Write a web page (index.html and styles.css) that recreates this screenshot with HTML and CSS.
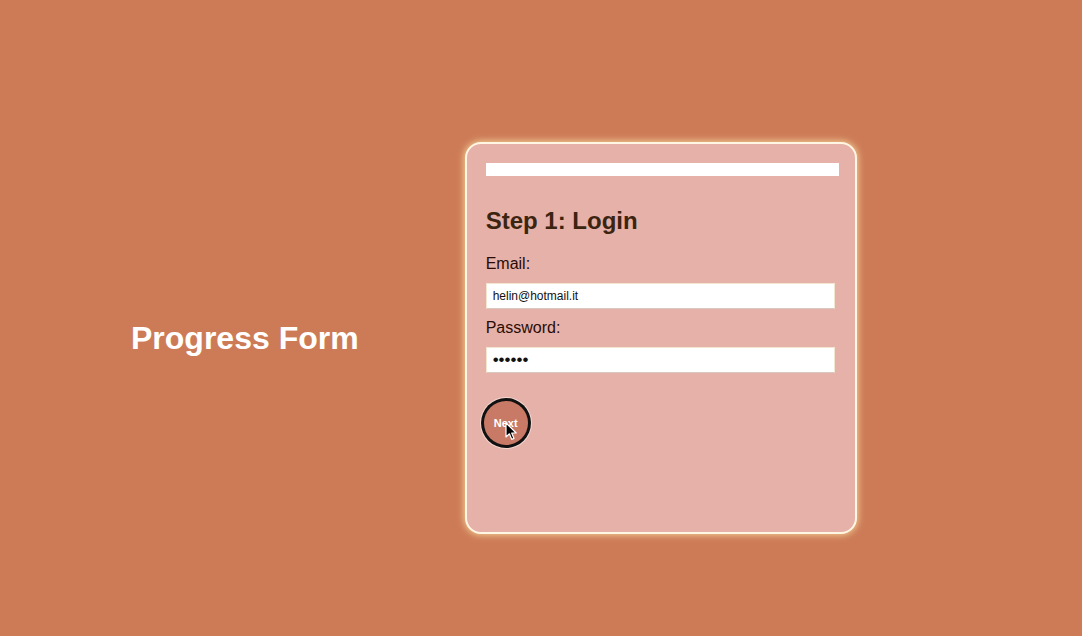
FILE: index.html
```html
<!doctype html>
<html lang="en">
<head>
    <meta charset="UTF-8">
    <title>Progress Form</title>
    <link rel="stylesheet" href="styles.css">
</head>
<body>
    <div class="page">
        <h1 class="title">Progress Form</h1>
        <div class="card">
            <div class="progress">
                <div class="progress-fill" style="width: 0%"></div>
            </div>
            <form class="step" id="step1">
                <h2>Step 1: Login</h2>
                <label for="email">Email:</label>
                <input type="email" id="email" value="helin@hotmail.it">
                <label for="password">Password:</label>
                <input type="password" id="password" value="123456">
                <div class="actions">
                    <button type="button" class="next">Next</button>
                    <svg class="cursor" width="13" height="19" viewBox="0 0 13 19">
                        <path d="M1 1 L1 15 L4.4 11.8 L6.8 17.4 L9 16.4 L6.7 11 L11.2 11 Z" fill="#000" stroke="#fff" stroke-width="1.2" stroke-linejoin="round"/>
                    </svg>
                </div>
            </form>
        </div>
    </div>
</body>
</html>
```

FILE: styles.css
```css
* {
    box-sizing: border-box;
}
body {
    margin: 0;
    background: #cd7b57;
    font-family: 'Liberation Sans', Arial, sans-serif;
    overflow: hidden;
}
.page {
    display: flex;
    align-items: center;
    gap: 106px;
    height: 636px;
    padding: 40px 0 0 131px;
}
.title {
    margin: 0;
    color: #fff;
    font-size: 32px;
    font-weight: bold;
}
.card {
    width: 392px;
    height: 392px;
    padding: 19px 16px 19px 19px;
    background: #e6b1a8;
    border: 2px solid #fff6e4;
    border-radius: 16px;
    box-shadow: 0 0 7px 1px rgba(255, 236, 170, 0.75);
}
.progress {
    height: 13px;
    background: #fff;
}
.progress-fill {
    height: 100%;
    background: #c87660;
}
.step h2 {
    margin: 31px 0 20px;
    color: #3b2410;
    font-size: 24px;
    font-weight: bold;
    line-height: 28px;
}
.step label {
    display: block;
    margin-bottom: 10px;
    color: #2a0c06;
    font-size: 16px;
    line-height: 18px;
}
.step input {
    display: block;
    width: 349px;
    height: 26px;
    margin: 0 0 10px;
    padding: 0 6px;
    border: 1px solid #f3e6cf;
    border-bottom-color: #d8c8c0;
    background: #fff;
    color: #111;
    font-family: 'Liberation Sans', Arial, sans-serif;
    font-size: 12px;
    outline: none;
}
.step input[type=password] {
    font-size: 17px;
    letter-spacing: 0;
}
.actions {
    position: relative;
    margin-top: 28px;
}
.next {
    width: 44px;
    height: 44px;
    margin-left: -2px;
    border: none;
    border-radius: 50%;
    background: #c97a66;
    color: #fff;
    font-family: 'Liberation Sans', Arial, sans-serif;
    font-size: 11px;
    font-weight: bold;
    padding: 0;
    box-shadow: 0 0 0 3px #111, 0 0 0 4px rgba(255, 240, 235, 0.6);
}
.cursor {
    position: absolute;
    left: 19px;
    top: 21px;
}
```
